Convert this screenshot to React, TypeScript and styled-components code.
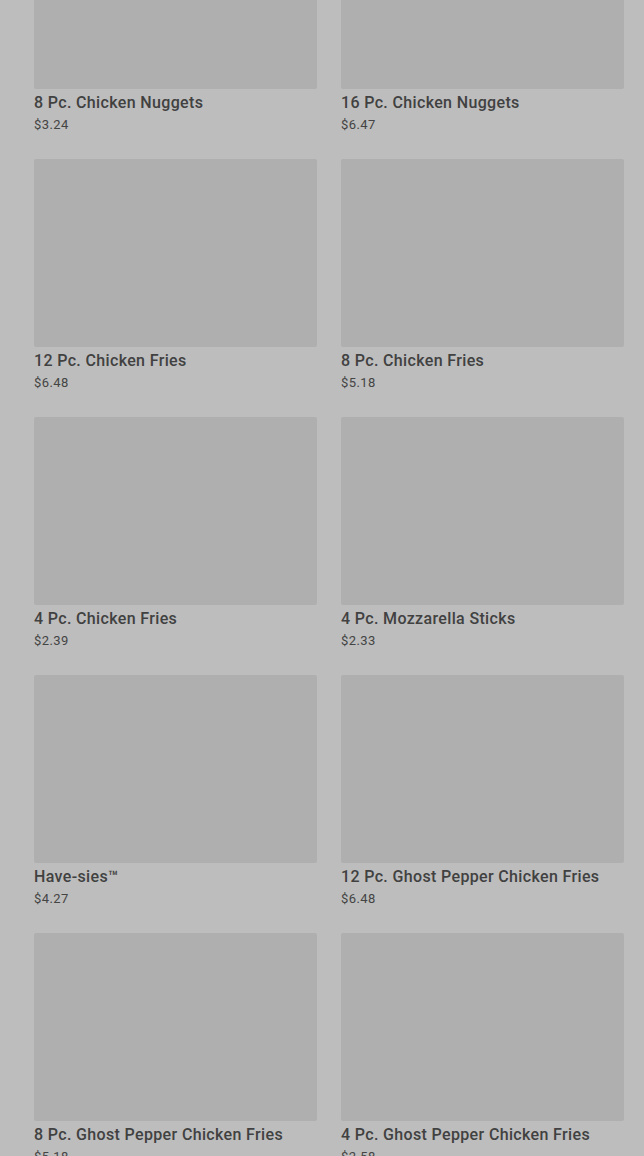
import React from "react";
import styled, { createGlobalStyle } from "styled-components";

const items = [
  { name: "8 Pc. Chicken Nuggets", price: "$3.24" },
  { name: "16 Pc. Chicken Nuggets", price: "$6.47" },
  { name: "12 Pc. Chicken Fries", price: "$6.48" },
  { name: "8 Pc. Chicken Fries", price: "$5.18" },
  { name: "4 Pc. Chicken Fries", price: "$2.39" },
  { name: "4 Pc. Mozzarella Sticks", price: "$2.33" },
  { name: "Have-sies™", price: "$4.27" },
  { name: "12 Pc. Ghost Pepper Chicken Fries", price: "$6.48" },
  { name: "8 Pc. Ghost Pepper Chicken Fries", price: "$5.18" },
  { name: "4 Pc. Ghost Pepper Chicken Fries", price: "$2.58" },
];

function App() {
  return (
    <Page>
      <GlobalStyle />
      <Grid>
        {items.map((item) => (
          <Card key={item.name}>
            <Thumb />
            <Title>{item.name}</Title>
            <Price>{item.price}</Price>
          </Card>
        ))}
      </Grid>
    </Page>
  );
}

const GlobalStyle = createGlobalStyle`
  body {
    margin: 0;
    background: #bdbdbd;
    font-family: Roboto, "Liberation Sans", sans-serif;
  }
`;

const Page = styled.div`
  height: 1156px;
  overflow: hidden;
  background: #bdbdbd;
`;

// list is scrolled: first row of thumbnails sits partly above the fold
const Grid = styled.div`
  display: grid;
  grid-template-columns: 283px 283px;
  column-gap: 24px;
  padding: 0 20px 0 34px;
  margin-top: -99px;
`;

const Card = styled.div`
  display: flex;
  flex-direction: column;
  height: 258px;
`;

const Thumb = styled.div`
  height: 188px;
  background: #afafaf;
  border-radius: 2px;
`;

const Title = styled.div`
  margin-top: 4px;
  font-size: 16px;
  line-height: 20px;
  font-weight: 500;
  letter-spacing: 0.35px;
  color: #414141;
`;

const Price = styled.div`
  margin-top: 4px;
  font-size: 13px;
  line-height: 16px;
  letter-spacing: 0.4px;
  color: #444444;
`;

export default App;
